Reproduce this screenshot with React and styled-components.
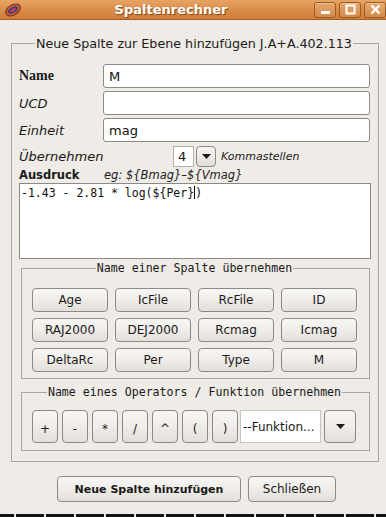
import React from 'react';
import styled, { createGlobalStyle } from 'styled-components';

const GlobalStyle = createGlobalStyle`
  html, body {
    margin: 0;
    padding: 0;
    background: #efebe7;
  }
  body {
    font-family: "DejaVu Sans", sans-serif;
    color: #1a1a1a;
  }
`;

function AppIcon () {
    return (
        <svg width="18" height="16" viewBox="0 0 18 16">
            <ellipse cx="9" cy="8" rx="8" ry="5" transform="rotate(-30 9 8)" fill="#c9602c" stroke="#7a2a18" strokeWidth="1"/>
            <ellipse cx="9" cy="8" rx="5.5" ry="3" transform="rotate(-30 9 8)" fill="#3a3f8f"/>
            <ellipse cx="9" cy="8" rx="3" ry="1.5" transform="rotate(-30 9 8)" fill="#d9413a"/>
        </svg>
    );
}

function WinButton (props) {
    const {kind} = props;
    return (
        <WinBtn>
            <svg width="13" height="11" viewBox="0 0 13 11">
                {kind === 'min' && <rect x="2" y="7" width="9" height="3" fill="#fff"/>}
                {kind === 'max' && <rect x="2.5" y="1.5" width="8" height="8" fill="none" stroke="#fff" strokeWidth="2"/>}
                {kind === 'close' && (
                    <path d="M2.5 1.5 L10.5 9.5 M10.5 1.5 L2.5 9.5" stroke="#fff" strokeWidth="2.4"/>
                )}
            </svg>
        </WinBtn>
    );
}

function Arrow () {
    return (
        <svg width="9" height="5" viewBox="0 0 9 5">
            <path d="M0 0 H9 L4.5 5 Z" fill="#1a1a1a"/>
        </svg>
    );
}

const columns = [
    'Age', 'IcFile', 'RcFile', 'ID',
    'RAJ2000', 'DEJ2000', 'Rcmag', 'Icmag',
    'DeltaRc', 'Per', 'Type', 'M'
];

const operators = ['+', '-', '*', '/', '^', '(', ')'];

function App () {
    return (
        <Window>
            <GlobalStyle/>
            <TitleBar>
                <IconSlot><AppIcon/></IconSlot>
                <Title>Spaltenrechner</Title>
                <WinButtons>
                    <WinButton kind="min"/>
                    <WinButton kind="max"/>
                    <WinButton kind="close"/>
                </WinButtons>
            </TitleBar>

            <Body>
                <OuterGroup>
                    <OuterLegend>Neue Spalte zur Ebene hinzufügen J.A+A.402.113</OuterLegend>
                    <FormGrid>
                        <Label bold>Name</Label>
                        <TextField>M</TextField>
                        <Label>UCD</Label>
                        <TextField/>
                        <Label>Einheit</Label>
                        <TextField>mag</TextField>
                    </FormGrid>

                    <DigitsRow>
                        <Label>Übernehmen</Label>
                        <SpinValue>4</SpinValue>
                        <SmallDrop><Arrow/></SmallDrop>
                        <Hint>Kommastellen</Hint>
                    </DigitsRow>

                    <ExprHead>
                        <ExprLabel>Ausdruck</ExprLabel>
                        <ExprHint>eg: ${'{'}Bmag{'}'}–${'{'}Vmag{'}'}</ExprHint>
                    </ExprHead>
                    <ExprArea>-1.43 - 2.81 * log(${'{'}Per{'}'}<Caret/>)</ExprArea>

                    <SubGroup>
                        <SubLegend>Name einer Spalte übernehmen</SubLegend>
                        <ColumnGrid>
                            {columns.map((c) => <Button key={c}>{c}</Button>)}
                        </ColumnGrid>
                    </SubGroup>

                    <SubGroup spaced>
                        <SubLegend>Name eines Operators / Funktion übernehmen</SubLegend>
                        <OpRow>
                            <Ops>
                                {operators.map((o) => <OpButton key={o}>{o}</OpButton>)}
                            </Ops>
                            <Combo>--Funktion...</Combo>
                            <ComboDrop><Arrow/></ComboDrop>
                        </OpRow>
                    </SubGroup>
                </OuterGroup>

                <Actions>
                    <ActionButton primary>Neue Spalte hinzufügen</ActionButton>
                    <ActionButton>Schließen</ActionButton>
                </Actions>
            </Body>
            <BottomEdge/>
        </Window>
    );
}

const Window = styled.div`
  width: 386px;
  height: 517px;
  display: flex;
  flex-direction: column;
  background: #efebe7;
  overflow: hidden;
`;
const TitleBar = styled.div`
  position: relative;
  height: 19px;
  flex: none;
  display: flex;
  align-items: center;
  background: linear-gradient(to bottom, #e8a464 0%, #dc8e4c 50%, #cf7c38 100%);
  border-bottom: 1px solid #a85e22;
`;
const IconSlot = styled.div`
  width: 22px;
  display: flex;
  justify-content: center;
  margin-left: 2px;
`;
const Title = styled.div`
  flex: 1;
  text-align: center;
  font-family: "DejaVu Sans", sans-serif;
  font-weight: bold;
  font-size: 13px;
  color: #fff;
  text-shadow: 1px 1px 1px #7a4416;
  padding-left: 4px;
`;
const WinButtons = styled.div`
  display: flex;
  gap: 3px;
  margin-right: 0;
`;
const WinBtn = styled.div`
  width: 20px;
  height: 14px;
  border: 1px solid #9a5a24;
  border-radius: 3px;
  background: linear-gradient(to bottom, #e6a86e, #d38a48);
  box-shadow: inset 0 1px 0 rgba(255,255,255,.3);
  display: flex;
  align-items: center;
  justify-content: center;
`;
const Body = styled.div`
  flex: 1;
  padding: 16px 7px 0 11px;
`;
const OuterGroup = styled.fieldset`
  margin: 0;
  padding: 13px 7px 10px 7px;
  border: 1px solid #a9a59f;
  min-width: 0;
`;
const OuterLegend = styled.legend`
  font-size: 12.7px;
  line-height: 15px;
  padding: 0 1px;
  margin-left: 16px;
  color: #1a1a1a;
`;
const FormGrid = styled.div`
  display: grid;
  grid-template-columns: 84px 1fr;
  grid-auto-rows: 24px;
  row-gap: 3px;
  padding-right: 1px;
`;
const Label = styled.div`
  display: flex;
  align-items: center;
  font-family: ${p => p.bold ? '"Liberation Serif", serif' : '"DejaVu Sans", sans-serif'};
  font-size: ${p => p.bold ? '14px' : '13px'};
  font-weight: ${p => p.bold ? 'bold' : 'normal'};
  font-style: ${p => p.bold ? 'normal' : 'italic'};
  color: #1a1a1a;
`;
const TextField = styled.div`
  background: #fff;
  border: 1px solid #8d8984;
  border-radius: 3px;
  display: flex;
  align-items: center;
  padding: 0 5px;
  font-size: 13px;
  color: #111;
`;
const DigitsRow = styled.div`
  display: flex;
  align-items: center;
  height: 21px;
  margin-top: 4px;
  ${Label} {
    width: 154px;
  }
`;
const SpinValue = styled.div`
  width: 21px;
  height: 21px;
  box-sizing: border-box;
  background: #fff;
  border: 1px solid #b3afa9;
  font-size: 13px;
  display: flex;
  align-items: center;
  padding-left: 4px;
`;
const SmallDrop = styled.div`
  width: 20px;
  height: 21px;
  box-sizing: border-box;
  margin-left: 2px;
  border: 1px solid #8d8984;
  border-radius: 4px;
  background: linear-gradient(to bottom, #f7f5f3, #e2ded9);
  display: flex;
  align-items: center;
  justify-content: center;
`;
const Hint = styled.div`
  margin-left: 5px;
  font-size: 11px;
  font-style: italic;
`;
const ExprHead = styled.div`
  display: flex;
  align-items: center;
  height: 14px;
  margin-top: 1px;
`;
const ExprLabel = styled.div`
  width: 85px;
  font-size: 11.5px;
  font-weight: bold;
`;
const ExprHint = styled.div`
  font-size: 11.5px;
  font-style: italic;
  color: #222;
`;
const ExprArea = styled.div`
  height: 76px;
  box-sizing: border-box;
  margin-top: 1px;
  background: #fff;
  border: 1px solid #8d8984;
  padding: 2px 1px;
  font-family: "DejaVu Sans Mono", monospace;
  font-size: 11.5px;
  line-height: 15px;
  color: #111;
`;
const Caret = styled.span`
  display: inline-block;
  width: 1px;
  height: 13px;
  background: #000;
  vertical-align: -2px;
`;
const SubGroup = styled.fieldset`
  margin: ${p => p.spaced ? '7px' : '3px'} 1px 0 2px;
  padding: ${p => p.spaced ? '12px 12px 7px 10px' : '14px 12px 6px 10px'};
  border: 1px solid #a9a59f;
  min-width: 0;
`;
const SubLegend = styled.legend`
  margin: 0 auto;
  padding: 0 1px;
  font-family: "DejaVu Sans Mono", monospace;
  font-size: 11.6px;
  line-height: 12px;
  color: #1a1a1a;
`;
const ColumnGrid = styled.div`
  display: grid;
  grid-template-columns: repeat(4, 1fr);
  grid-auto-rows: 24px;
  column-gap: 7px;
  row-gap: 6px;
`;
const Button = styled.div`
  display: flex;
  align-items: center;
  justify-content: center;
  border: 1px solid #8d8984;
  border-radius: 4px;
  background: linear-gradient(to bottom, #f8f7f5 0%, #efece9 50%, #e3dfda 100%);
  font-size: 12px;
  color: #1a1a1a;
`;
const OpRow = styled.div`
  display: flex;
  height: 33px;
`;
const Ops = styled.div`
  display: flex;
  gap: 4px;
`;
const OpButton = styled(Button)`
  width: 26px;
  box-sizing: border-box;
  font-size: 12px;
  padding-top: 4px;
`;
const Combo = styled.div`
  width: 81px;
  margin-left: 2px;
  box-sizing: border-box;
  background: #fff;
  border: 1px solid #c9c5c0;
  display: flex;
  align-items: center;
  padding-left: 2px;
  font-size: 12px;
  white-space: nowrap;
  overflow: hidden;
`;
const ComboDrop = styled(Button)`
  width: 32px;
  margin-left: 3px;
  box-sizing: border-box;
`;
const Actions = styled.div`
  display: flex;
  justify-content: center;
  gap: 7px;
  margin-top: 14px;
  padding-left: 3px;
`;
const ActionButton = styled(Button)`
  height: 26px;
  box-sizing: border-box;
  width: ${p => p.primary ? '184px' : '88px'};
  font-size: ${p => p.primary ? '11px' : '12px'};
  font-weight: ${p => p.primary ? 'bold' : 'normal'};
`;
const BottomEdge = styled.div`
  height: 3px;
  flex: none;
  background: repeating-linear-gradient(to right, #111 0 14px, #e8e8e8 14px 16px, #111 16px 30px);
`;

export default App;
